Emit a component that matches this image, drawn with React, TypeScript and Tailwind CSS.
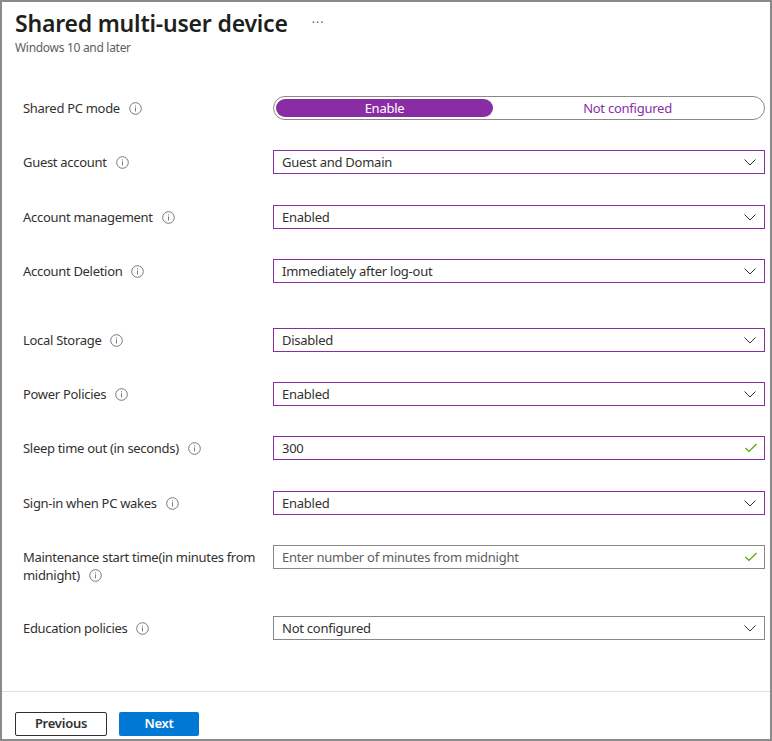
import * as React from "react";

const font = { fontFamily: '"Noto Sans", "Open Sans", Arial, sans-serif' };

function InfoIcon() {
  return (
    <svg width="13" height="13" viewBox="0 0 13 13" className="ml-[9px] shrink-0">
      <circle cx="6.5" cy="6.5" r="5.8" fill="none" stroke="#797775" strokeWidth="1" />
      <rect x="6" y="5.4" width="1" height="4" fill="#797775" />
      <rect x="6" y="3.4" width="1" height="1" fill="#797775" />
    </svg>
  );
}

function Chevron() {
  return (
    <svg width="12" height="7" viewBox="0 0 12 7" className="mr-[8px] shrink-0">
      <path d="M0.5 0.5 L6 6 L11.5 0.5" fill="none" stroke="#323130" strokeWidth="1" />
    </svg>
  );
}

function Check() {
  return (
    <svg width="12" height="10" viewBox="0 0 12 10" className="mr-[7px] shrink-0">
      <path d="M0.5 5 L4 8.5 L11.5 1" fill="none" stroke="#57a300" strokeWidth="1.2" />
    </svg>
  );
}

function Label({ children }: { children: React.ReactNode }) {
  return (
    <div className="w-[250px] shrink-0 whitespace-nowrap py-[3px] text-[13px] leading-[18px] tracking-[-0.3px] text-[#323130]">
      {children}
    </div>
  );
}

function Select({ value, purple = true }: { value: string; purple?: boolean }) {
  return (
    <div
      className={`flex h-[24px] flex-1 items-center justify-between border bg-white ${
        purple ? "border-[#8a2da5]" : "border-[#8a8886]"
      }`}
    >
      <span className="pl-[8px] pt-px text-[13px] tracking-[-0.25px] text-[#323130]">{value}</span>
      <Chevron />
    </div>
  );
}

function TextInput({ value, placeholder }: { value?: string; placeholder?: string }) {
  return (
    <div
      className={`flex h-[24px] flex-1 items-center justify-between border bg-white ${
        value ? "border-[#8a2da5]" : "border-[#8a8886]"
      }`}
    >
      <span
        className={`pl-[8px] pt-px text-[13px] tracking-[-0.25px] ${
          value ? "text-[#323130]" : "text-[#605e5c]"
        }`}
      >
        {value ?? placeholder}
      </span>
      <Check />
    </div>
  );
}

export default function App() {
  const rows: { label: React.ReactNode; control: React.ReactNode; gap: string }[] = [
    { label: "Guest account", control: <Select value="Guest and Domain" />, gap: "mt-[30px]" },
    { label: "Account management", control: <Select value="Enabled" />, gap: "mt-[31px]" },
    { label: "Account Deletion", control: <Select value="Immediately after log-out" />, gap: "mt-[30px]" },
    { label: "Local Storage", control: <Select value="Disabled" />, gap: "mt-[45px]" },
    { label: "Power Policies", control: <Select value="Enabled" />, gap: "mt-[30px]" },
    { label: "Sleep time out (in seconds)", control: <TextInput value="300" />, gap: "mt-[30px]" },
    { label: "Sign-in when PC wakes", control: <Select value="Enabled" />, gap: "mt-[31px]" },
  ];

  return (
    <div style={font} className="flex h-[741px] w-[772px] flex-col border-2 border-[#8a8a8a] bg-white">
      <div className="flex-1 pl-[13px] pr-[5px]">
        <div className="mt-[6px] flex h-[30px] items-center">
          <h1 className="text-[23px] font-semibold leading-[26px] tracking-[-0.2px] text-[#201f1e]">
            Shared multi-user device
          </h1>
          <span className="ml-[24px] text-[12px] tracking-[1px] text-[#605e5c]">···</span>
        </div>
        <div className="mt-[2px] text-[12px] leading-[16px] tracking-[-0.3px] text-[#605e5c]">
          Windows 10 and later
        </div>

        <div className="pl-[8px]">
          <div className="mt-[40px] flex items-start">
            <Label>
              <span className="flex items-center">
                Shared PC mode
                <InfoIcon />
              </span>
            </Label>
            <div className="flex h-[24px] flex-1 items-center rounded-full border border-[#8a8886] p-[2px]">
              <div className="flex h-[18px] w-[217px] items-center justify-center rounded-full bg-[#8a2da5] pt-px text-[13px] tracking-[-0.25px] text-white">
                Enable
              </div>
              <div className="flex flex-1 items-center justify-center pt-px text-[13px] tracking-[-0.25px] text-[#8a2da5]">
                Not configured
              </div>
            </div>
          </div>

          {rows.map((r, i) => (
            <div key={i} className={`${r.gap} flex items-start`}>
              <Label>
                <span className="flex items-center">
                  {r.label}
                  <InfoIcon />
                </span>
              </Label>
              {r.control}
            </div>
          ))}

          <div className="mt-[30px] flex items-start">
            <Label>
              Maintenance start time(in minutes from
              <br />
              <span className="inline-flex items-center">
                midnight)
                <InfoIcon />
              </span>
            </Label>
            <TextInput placeholder="Enter number of minutes from midnight" />
          </div>

          <div className="mt-[29px] flex items-start">
            <Label>
              <span className="flex items-center">
                Education policies
                <InfoIcon />
              </span>
            </Label>
            <Select value="Not configured" purple={false} />
          </div>
        </div>
      </div>

      <div className="flex gap-[12px] border-t border-[#e1dfdd] pl-[13px] pt-[20px] pb-[3px]">
        <button className="h-[24px] w-[92px] rounded-[2px] border border-[#323130] bg-white text-[13px] font-semibold tracking-[-0.25px] text-[#323130]">
          Previous
        </button>
        <button className="h-[24px] w-[80px] rounded-[2px] bg-[#0078d4] text-[13px] font-semibold tracking-[-0.25px] text-white">
          Next
        </button>
      </div>
    </div>
  );
}
